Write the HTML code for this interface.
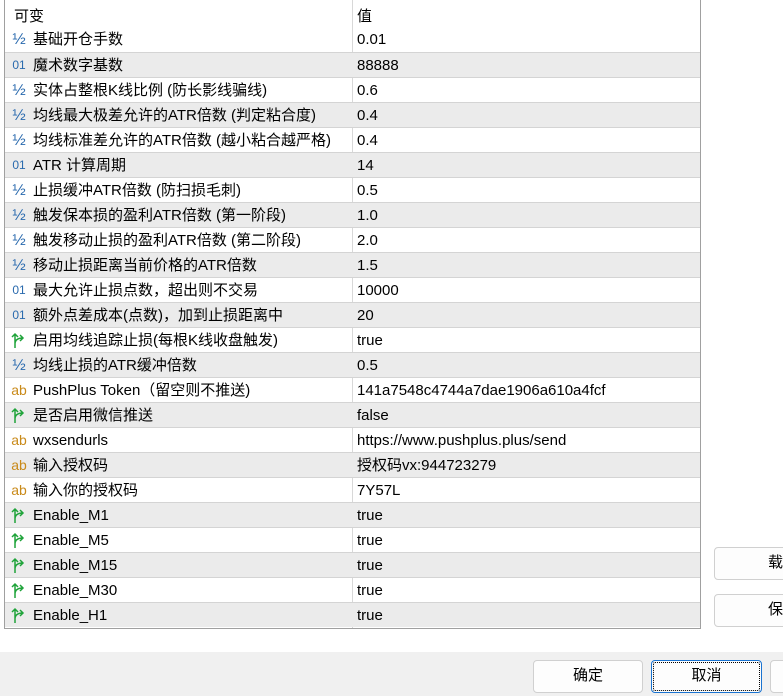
<!DOCTYPE html>
<html><head><meta charset="utf-8"><style>
body{margin:0;width:783px;height:696px;overflow:hidden;background:#fff;font-family:"Liberation Sans","Noto Sans CJK SC",sans-serif;font-size:15px;color:#000;position:relative}
.tbl{position:absolute;left:4px;top:0;width:697px;height:629px;border-left:1px solid #a0a0a0;border-right:1px solid #a0a0a0;border-bottom:1px solid #a0a0a0;box-sizing:border-box;overflow:hidden}
.vd{position:absolute;left:347px;top:0;width:1px;height:629px;background:#d8d8d8}
.r{position:absolute;left:0;width:697px;height:25px;border-top:1px solid #d4d4d4;box-sizing:border-box;line-height:25px}
.r.s{background:#ebebeb}
.n{position:absolute;left:28px;white-space:nowrap}
.v{position:absolute;left:352px;white-space:nowrap}
.i{position:absolute;left:4px;top:0;width:20px;text-align:center}
.h{color:#2a6aae;font-size:16px}
.o{color:#2a6aae;font-size:12px}
.a{color:#c98a1a;font-size:14px}
.g{position:absolute;left:5px;top:3px}
.bot{position:absolute;left:0;top:652px;width:783px;height:44px;background:#f0f0f0}
.btn{position:absolute;background:#fdfdfd;border:1px solid #d0d0d0;border-radius:4px;box-sizing:border-box;text-align:center;line-height:30px;font-size:15px}
</style></head><body>
<svg width="0" height="0" style="position:absolute"><defs><symbol id="ar" viewBox="0 0 18 18"><path d="M5 17V3M2 6L5 3L8 6M5 13Q5 7 13 7M10 4L13 7L10 10" fill="none" stroke="#1fa33a" stroke-width="1.5"/></symbol></defs></svg>
<div class="tbl">
<div class="vd"></div>
<div style="position:absolute;left:9px;top:5px">可变</div>
<div style="position:absolute;left:352px;top:5px">值</div>
<div class="r" style="top:27px;border-top:none"><span class="i h">½</span><span class="n">基础开仓手数</span><span class="v">0.01</span></div>
<div class="r s" style="top:52px"><span class="i o">01</span><span class="n">魔术数字基数</span><span class="v">88888</span></div>
<div class="r" style="top:77px"><span class="i h">½</span><span class="n">实体占整根K线比例 (防长影线骗线)</span><span class="v">0.6</span></div>
<div class="r s" style="top:102px"><span class="i h">½</span><span class="n">均线最大极差允许的ATR倍数 (判定粘合度)</span><span class="v">0.4</span></div>
<div class="r" style="top:127px"><span class="i h">½</span><span class="n">均线标准差允许的ATR倍数 (越小粘合越严格)</span><span class="v">0.4</span></div>
<div class="r s" style="top:152px"><span class="i o">01</span><span class="n">ATR 计算周期</span><span class="v">14</span></div>
<div class="r" style="top:177px"><span class="i h">½</span><span class="n">止损缓冲ATR倍数 (防扫损毛刺)</span><span class="v">0.5</span></div>
<div class="r s" style="top:202px"><span class="i h">½</span><span class="n">触发保本损的盈利ATR倍数 (第一阶段)</span><span class="v">1.0</span></div>
<div class="r" style="top:227px"><span class="i h">½</span><span class="n">触发移动止损的盈利ATR倍数 (第二阶段)</span><span class="v">2.0</span></div>
<div class="r s" style="top:252px"><span class="i h">½</span><span class="n">移动止损距离当前价格的ATR倍数</span><span class="v">1.5</span></div>
<div class="r" style="top:277px"><span class="i o">01</span><span class="n">最大允许止损点数，超出则不交易</span><span class="v">10000</span></div>
<div class="r s" style="top:302px"><span class="i o">01</span><span class="n">额外点差成本(点数)，加到止损距离中</span><span class="v">20</span></div>
<div class="r" style="top:327px"><svg class="g" width="18" height="18"><use href="#ar"/></svg><span class="n">启用均线追踪止损(每根K线收盘触发)</span><span class="v">true</span></div>
<div class="r s" style="top:352px"><span class="i h">½</span><span class="n">均线止损的ATR缓冲倍数</span><span class="v">0.5</span></div>
<div class="r" style="top:377px"><span class="i a">ab</span><span class="n">PushPlus Token（留空则不推送)</span><span class="v">141a7548c4744a7dae1906a610a4fcf</span></div>
<div class="r s" style="top:402px"><svg class="g" width="18" height="18"><use href="#ar"/></svg><span class="n">是否启用微信推送</span><span class="v">false</span></div>
<div class="r" style="top:427px"><span class="i a">ab</span><span class="n">wxsendurls</span><span class="v">https://www.pushplus.plus/send</span></div>
<div class="r s" style="top:452px"><span class="i a">ab</span><span class="n">输入授权码</span><span class="v">授权码vx:944723279</span></div>
<div class="r" style="top:477px"><span class="i a">ab</span><span class="n">输入你的授权码</span><span class="v">7Y57L</span></div>
<div class="r s" style="top:502px"><svg class="g" width="18" height="18"><use href="#ar"/></svg><span class="n">Enable_M1</span><span class="v">true</span></div>
<div class="r" style="top:527px"><svg class="g" width="18" height="18"><use href="#ar"/></svg><span class="n">Enable_M5</span><span class="v">true</span></div>
<div class="r s" style="top:552px"><svg class="g" width="18" height="18"><use href="#ar"/></svg><span class="n">Enable_M15</span><span class="v">true</span></div>
<div class="r" style="top:577px"><svg class="g" width="18" height="18"><use href="#ar"/></svg><span class="n">Enable_M30</span><span class="v">true</span></div>
<div class="r s" style="top:602px"><svg class="g" width="18" height="18"><use href="#ar"/></svg><span class="n">Enable_H1</span><span class="v">true</span></div>
</div>
<div class="btn" style="left:714px;top:547px;width:80px;height:33px;text-align:left;padding-left:53px">载</div>
<div class="btn" style="left:714px;top:594px;width:80px;height:33px;text-align:left;padding-left:53px">保</div>
<div class="bot"></div>
<div class="btn" style="left:533px;top:660px;width:110px;height:33px">确定</div>
<div class="btn" style="left:651px;top:660px;width:111px;height:33px;border:1px solid #1a73d0;outline:1px dotted #000;outline-offset:-3px">取消</div>
<div class="btn" style="left:770px;top:660px;width:40px;height:33px"></div>
</body></html>
